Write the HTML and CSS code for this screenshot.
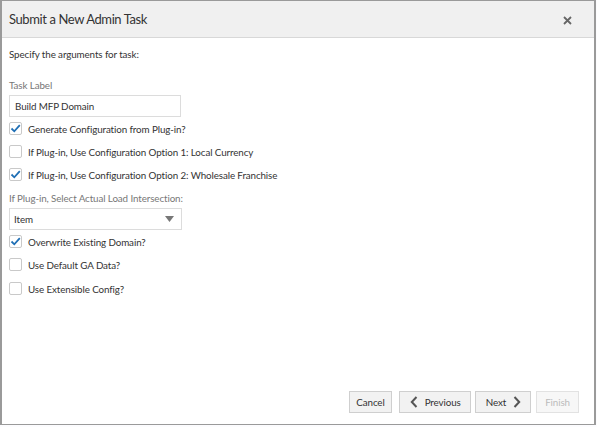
FILE: index.html
```html
<!DOCTYPE html>
<html>
<head>
<meta charset="utf-8">
<link rel="stylesheet" href="styles.css">
</head>
<body>
<div class="dialog">
  <div class="header">
    <div class="title">Submit a New Admin Task</div>
    <div class="close">
      <svg width="9" height="9" viewBox="0 0 9 9"><path d="M1 1L8 8M8 1L1 8" stroke="#666" stroke-width="1.8"/></svg>
    </div>
  </div>
  <div class="body">
    <div class="intro">Specify the arguments for task:</div>
    <div class="field-label first">Task Label</div>
    <div class="input">Build MFP Domain</div>
    <div class="check"><span class="box on"><svg width="13" height="13" viewBox="0 0 13 13"><path d="M2.5 6.5L5.3 9.3L10.8 3.2" fill="none" stroke="#1f6fb5" stroke-width="1.8"/></svg></span>Generate Configuration from Plug-in?</div>
    <div class="check"><span class="box"></span>If Plug-in, Use Configuration Option 1: Local Currency</div>
    <div class="check"><span class="box on"><svg width="13" height="13" viewBox="0 0 13 13"><path d="M2.5 6.5L5.3 9.3L10.8 3.2" fill="none" stroke="#1f6fb5" stroke-width="1.8"/></svg></span>If Plug-in, Use Configuration Option 2: Wholesale Franchise</div>
    <div class="field-label">If Plug-in, Select Actual Load Intersection:</div>
    <div class="select">Item<svg class="caret" width="9" height="6" viewBox="0 0 9 6"><path d="M0 0H9L4.5 6Z" fill="#777"/></svg></div>
    <div class="check"><span class="box on"><svg width="13" height="13" viewBox="0 0 13 13"><path d="M2.5 6.5L5.3 9.3L10.8 3.2" fill="none" stroke="#1f6fb5" stroke-width="1.8"/></svg></span>Overwrite Existing Domain?</div>
    <div class="check"><span class="box"></span>Use Default GA Data?</div>
    <div class="check"><span class="box"></span>Use Extensible Config?</div>
  </div>
  <div class="footer">
    <button class="btn cancel">Cancel</button>
    <button class="btn prev"><svg class="chev" width="8" height="12" viewBox="0 0 8 12"><path d="M6.5 1L1.8 6L6.5 11" fill="none" stroke="#555" stroke-width="2"/></svg>Previous</button>
    <button class="btn next">Next<svg class="chev right" width="8" height="12" viewBox="0 0 8 12"><path d="M1.5 1L6.2 6L1.5 11" fill="none" stroke="#555" stroke-width="2"/></svg></button>
    <button class="btn disabled">Finish</button>
  </div>
</div>
</body>
</html>
```

FILE: styles.css
```css
html, body {
  margin: 0;
  padding: 0;
  background: #fcfcfe;
}
body {
  width: 597px;
  height: 427px;
  overflow: hidden;
  font-family: Lato, "Open Sans", sans-serif;
  color: #333;
}
.dialog {
  box-sizing: border-box;
  width: 596px;
  height: 425px;
  border: 1px solid #9a9a9a;
  border-left-width: 2px;
  border-right-width: 2px;
  background: #fff;
  display: flex;
  flex-direction: column;
}
.header {
  height: 36px;
  background: #f0f0f0;
  border-bottom: 1px solid #d8d8d8;
  display: flex;
  align-items: center;
  justify-content: space-between;
  padding: 0 22px 0 7px;
  flex: none;
}
.title {
  font-size: 13px;
  color: #333;
  letter-spacing: -0.4px;
}
.close {
  display: flex;
  align-items: center;
  padding-top: 2px;
}
.body {
  flex: 1;
  padding: 0 7px;
  font-size: 9.8px;
  letter-spacing: -0.1px;
}
.intro {
  margin-top: 9px;
  line-height: 14px;
  color: #333;
}
.field-label {
  color: #777;
  line-height: 14px;
  margin-top: 5px;
}
.field-label.first {
  margin-top: 17px;
}
.input, .select {
  box-sizing: border-box;
  width: 172px;
  height: 22px;
  border: 1px solid #dcdcdc;
  margin-top: 3px;
  padding: 0 5px;
  display: flex;
  align-items: center;
  color: #333;
}
.select {
  width: 173px;
  justify-content: space-between;
  padding-right: 7px;
  padding-left: 4px;
}
.check {
  display: flex;
  align-items: center;
  height: 23px;
  color: #333;
}
.check:last-child {
  margin-top: 1px;
}
.box {
  box-sizing: border-box;
  width: 13px;
  height: 13px;
  border: 1px solid #c9c9c9;
  border-radius: 2px;
  margin-right: 6px;
  position: relative;
  background: #fff;
}
.box svg {
  position: absolute;
  left: -1px;
  top: -1px;
}
.footer {
  flex: none;
  display: flex;
  justify-content: flex-end;
  align-items: flex-end;
  padding: 0 15px 11px 0;
}
.btn {
  box-sizing: border-box;
  height: 22px;
  border: 1px solid #cfcfcf;
  background: #f2f2f2;
  font-family: Lato, "Open Sans", sans-serif;
  font-size: 9.8px;
  letter-spacing: -0.1px;
  color: #333;
  padding: 0 8px;
  display: flex;
  align-items: center;
  margin: 0 0 0 5px;
}
.btn.cancel {
  padding: 0 6px;
}
.btn.prev {
  margin-left: 7px;
  padding: 0 9px 0 10px;
}
.btn.next {
  margin-left: 4px;
  padding: 0 9px 0 10px;
}
.btn .chev {
  margin-right: 7px;
}
.btn .chev.right {
  margin-right: 0;
  margin-left: 7px;
}
.btn.disabled {
  background: #f7f7f7;
  color: #bbb;
  border-color: #e2e2e2;
  padding: 0 8px;
}
```
